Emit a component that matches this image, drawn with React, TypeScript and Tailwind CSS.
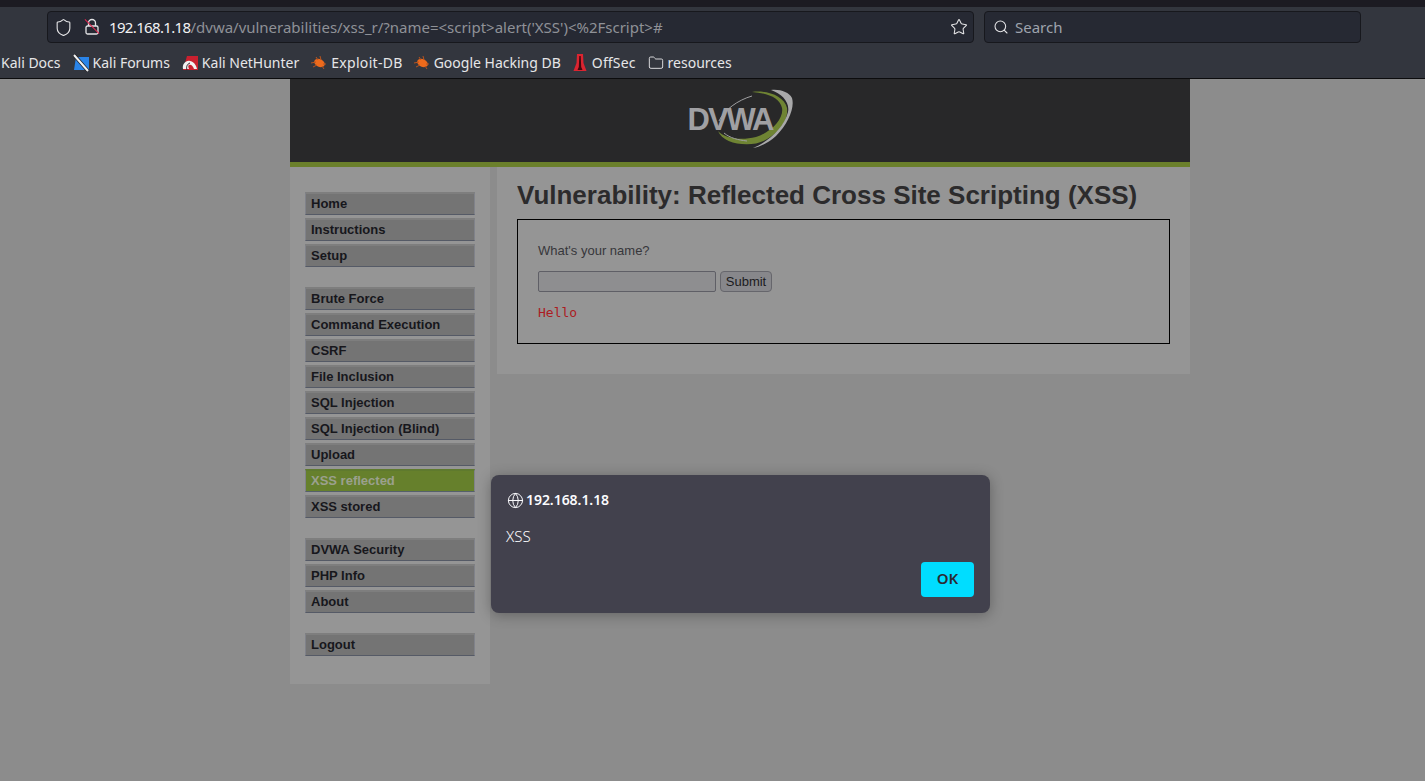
import React from "react";
import { Search, Star, Shield, Folder, Globe } from "lucide-react";

const menuGroups = [
  ["Home", "Instructions", "Setup"],
  ["Brute Force", "Command Execution", "CSRF", "File Inclusion", "SQL Injection", "SQL Injection (Blind)", "Upload", "XSS reflected", "XSS stored"],
  ["DVWA Security", "PHP Info", "About"],
  ["Logout"],
];

function Bug() {
  return (
    <svg width="16" height="15" viewBox="0 0 16 15" className="shrink-0">
      <ellipse cx="8.5" cy="8" rx="5.6" ry="3.8" fill="#ee6a1c" transform="rotate(25 8.5 8)" />
      <path d="M0 8l5-1M5 2l2 3M9 1l1 4M2 12l4-2M15 9l-3 0M13 14l-2-3" stroke="#b8541f" strokeWidth="1" />
    </svg>
  );
}

function Bookmark({ icon, label, className }: { icon?: React.ReactNode; label: string; className?: string }) {
  return (
    <div className={`flex items-center gap-1 ${className ?? ""}`}>
      {icon}
      <span>{label}</span>
    </div>
  );
}

function BrowserChrome() {
  return (
    <header className="shrink-0 font-['Noto_Sans',sans-serif]">
      <div className="h-[7px] bg-[#1c1b22]" />
      <div className="h-[72px] bg-[#33363e] border-b border-[#0c0c0d]">
        <div className="flex pt-1 pl-[47px] gap-[10px]">
          <div className="w-[927px] h-8 flex items-center bg-[#262933] border border-[#17181d] rounded pl-[6px] pr-[5px]">
            <Shield size={19} strokeWidth={1.4} className="text-[#e4e4e6]" />
            <div className="relative ml-[11px] w-[16px] h-[18px] shrink-0">
              <svg width="16" height="18" viewBox="0 0 16 18" fill="none" stroke="#e4e4e6" strokeWidth="1.3">
                <rect x="2" y="8" width="12" height="8" rx="1.5" />
                <path d="M4.5 8V5a3.5 3.5 0 0 1 7 0v3" />
              </svg>
              <div className="absolute left-[-2px] top-[8px] w-[20px] h-px bg-[#e22850] rotate-45" />
            </div>
            <div className="ml-[9px] text-[15px] text-[#8f9197] whitespace-nowrap tracking-[-0.01px]">
              <span className="text-[#f2f2f3] tracking-[-0.65px]">192.168.1.18</span>/dvwa/vulnerabilities/xss_r/?name=&lt;script&gt;alert('XSS')&lt;%2Fscript&gt;#
            </div>
            <Star size={18} strokeWidth={1.4} className="ml-auto text-[#e4e4e6]" />
          </div>
          <div className="w-[377px] h-8 flex items-center gap-[6px] bg-[#262933] border border-[#17181d] rounded pl-2">
            <Search size={16} strokeWidth={1.6} className="text-[#e4e4e6]" />
            <span className="text-[15px] text-[#9ea3ad]">Search</span>
          </div>
        </div>
        <div className="flex items-center h-[31px] mt-1 pl-[1px] text-[14px] text-[#e6e6e8] whitespace-nowrap">
          <Bookmark label="Kali Docs" />
          <Bookmark
            className="ml-3"
            label="Kali Forums"
            icon={
              <svg width="16" height="18" viewBox="0 0 16 18" className="shrink-0">
                <path d="M3 3h13v13H1z" fill="#2a84e8" />
                <path d="M1 1l14 16" stroke="#1c1c20" strokeWidth="3.6" />
                <path d="M1 1l14 16" stroke="#f2f2f2" strokeWidth="2" />
              </svg>
            }
          />
          <Bookmark
            className="ml-3"
            label="Kali NetHunter"
            icon={
              <svg width="16" height="16" viewBox="0 0 16 16" className="shrink-0">
                <path d="M5 1h11v14H1z" fill="#c9202f" />
                <path d="M1 14c-1-5 3-9 7-8 3 .5 6 3 7 8h-3c-1-3-3-5-5-4-1 .5-1 2 0 4H4z" fill="#f2f2f2" />
                <path d="M5 15c-1-3 0-6 3-7" stroke="#33222a" strokeWidth="1" fill="none" />
              </svg>
            }
          />
          <Bookmark className="ml-3 tracking-[0.3px]" label="Exploit-DB" icon={<Bug />} />
          <Bookmark className="ml-[11px]" label="Google Hacking DB" icon={<Bug />} />
          <Bookmark
            className="ml-[11px] tracking-[0.15px]"
            label="OffSec"
            icon={
              <svg width="16" height="19" viewBox="0 0 16 19" className="shrink-0">
                <path d="M5 1h6l.5 9 3 8H1.5l3-8z" fill="#dc2430" />
                <path d="M7.3 3h1.4l.5 11 1.3 3H5.5l1.3-3z" fill="#40090d" />
              </svg>
            }
          />
          <Bookmark
            className="ml-3"
            label="resources"
            icon={<Folder size={16} strokeWidth={1.4} className="text-[#e4e4e6]" />}
          />
        </div>
      </div>
    </header>
  );
}

function Logo() {
  return (
    <svg width="120" height="70" viewBox="0 0 120 70">
      <path d="M72 8C88 6 104 12 107 24C109 40 92 56 76 59.5C60 62 42 58 38 47C44 54 60 57 76 53C92 48 104 34 102 24C100 14 88 9 72 8Z" fill="#6f8433" />
      <path d="M91 6C100 5 109 8 112 14C115 24 108 40 96 52C88 59 80 63 73 64C88 58 104 44 108 28C110 18 102 10 91 6Z" fill="#a9a9aa" />
      <path d="M72 12C58 16 44 26 39 37M44 49C50 54 58 56 67 57" fill="none" stroke="#a0a0a2" strokeWidth="1" />
      <text x="7.5" y="46" fontFamily="'Liberation Sans', sans-serif" fontWeight="700" fontSize="31" letterSpacing="-2" fill="#a0a0a3">DVWA</text>
    </svg>
  );
}

function Sidebar() {
  return (
    <nav className="w-[200px] h-[517px] shrink-0 bg-[#959595] pt-[25px] px-[15px]">
      {menuGroups.map((group) => (
        <ul key={group[0]} className="mb-[20px] flex flex-col gap-[3px]">
          {group.map((item) => {
            const active = item === "XSS reflected";
            return (
              <li
                key={item}
                className={`h-[23px] pl-[5px] text-[13px] leading-[20px] font-bold border-t-2 border-b border-x border-x-[#80828a] ${
                  active
                    ? "bg-[#66802c] text-[#9ba08e] border-t-[#5f7a2e] border-b-[#55606b]"
                    : "bg-[#747474] text-[#17171c] border-t-[#7e7e7e] border-b-[#555a66]"
                }`}
              >
                {item}
              </li>
            );
          })}
        </ul>
      ))}
    </nav>
  );
}

function Content() {
  return (
    <main className="ml-[7px] w-[693px] h-[207px] bg-[#959595] pl-5 pr-5">
      <h1 className="pt-[13px] text-[26px] leading-[30px] font-bold text-[#2c2b2c]">
        Vulnerability: Reflected Cross Site Scripting (XSS)
      </h1>
      <div className="mt-[9px] h-[125px] border border-black pl-5 pt-[22px]">
        <p className="text-[13px] leading-[17px] text-[#37373b]">What's your name?</p>
        <div className="flex gap-1 mt-[12px]">
          <div className="w-[178px] h-[21px] bg-[#8e8e90] border border-[#5f5f66] rounded-[2px]" />
          <div className="w-[52px] h-[21px] bg-[#87878b] border border-[#66666c] rounded-[4px] text-[13px] leading-[19px] text-center text-[#1b1b20]">
            Submit
          </div>
        </div>
        <pre className="mt-[12px] text-[13px] leading-[17px] text-[#ac1c22] font-['DejaVu_Sans_Mono',monospace]">Hello</pre>
      </div>
    </main>
  );
}

function AlertDialog() {
  return (
    <div className="absolute left-[491px] top-[475px] w-[499px] h-[138px] bg-[#42414d] rounded-lg shadow-[0_2px_14px_rgba(0,0,0,0.3)] font-['Noto_Sans',sans-serif] text-[#fbfbfe] pl-[15px] pr-4 pt-[15px]">
      <div className="flex items-center gap-[2px] text-[14px] leading-5 font-semibold tracking-[-0.05px]">
        <Globe size={17} strokeWidth={1.4} className="ml-[1px]" />
        <span>192.168.1.18</span>
      </div>
      <p className="mt-4 text-[15px] leading-5 font-light">XSS</p>
      <div className="flex justify-end mt-4">
        <div className="w-[53px] h-[35px] bg-[#00ddff] rounded-[4px] text-[15px] leading-[33px] font-semibold text-center text-[#2b2a33]">
          OK
        </div>
      </div>
    </div>
  );
}

export default function App() {
  return (
    <div className="relative w-[1425px] h-[781px] overflow-hidden flex flex-col bg-[#8c8c8c] font-['Liberation_Sans',sans-serif]">
      <BrowserChrome />
      <div className="w-[900px] ml-[290px]">
        <div className="h-[83px] bg-[#282829] flex justify-center pt-[5px]">
          <Logo />
        </div>
        <div className="h-[5px] bg-[#6b802b]" />
        <div className="flex items-start">
          <Sidebar />
          <Content />
        </div>
      </div>
      <AlertDialog />
    </div>
  );
}
